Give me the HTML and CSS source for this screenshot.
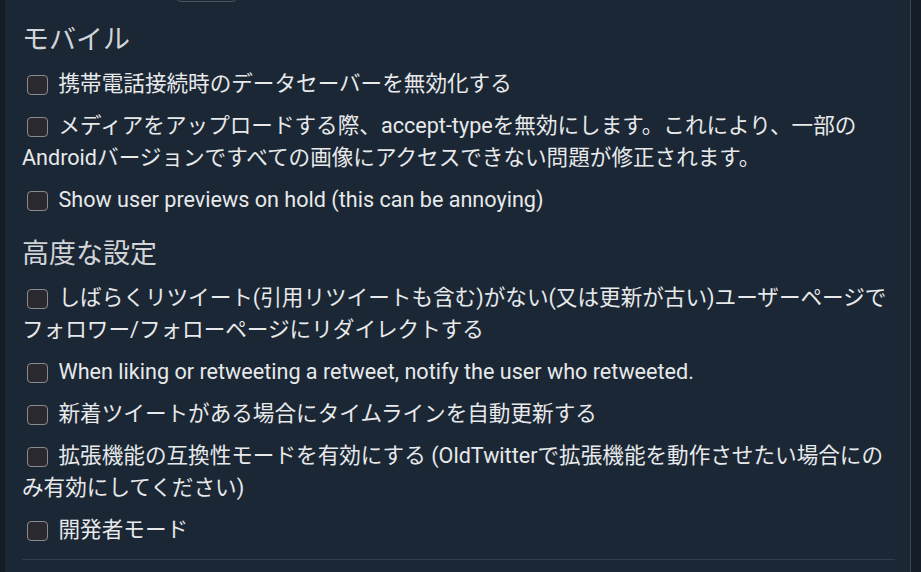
FILE: index.html
```html
<!DOCTYPE html>
<html lang="ja">
<head>
<meta charset="utf-8">
<link rel="stylesheet" href="styles.css">
</head>
<body>
<div class="layout">
  <div class="side-left"></div>
  <main class="panel">
    <div class="top-control"><span class="select-box"></span></div>
    <h2 class="section-title">モバイル</h2>
    <label class="option"><span class="check"></span>携帯電話接続時のデータセーバーを無効化する</label>
    <label class="option"><span class="check"></span>メディアをアップロードする際、accept-typeを無効にします。これにより、一部のAndroidバージョンですべての画像にアクセスできない問題が修正されます。</label>
    <label class="option"><span class="check"></span>Show user previews on hold (this can be annoying)</label>
    <h2 class="section-title second">高度な設定</h2>
    <label class="option"><span class="check"></span>しばらくリツイート(引用リツイートも含む)がない(又は更新が古い)ユーザーページでフォロワー/フォローページにリダイレクトする</label>
    <label class="option"><span class="check"></span>When liking or retweeting a retweet, notify the user who retweeted.</label>
    <label class="option"><span class="check"></span>新着ツイートがある場合にタイムラインを自動更新する</label>
    <label class="option"><span class="check"></span>拡張機能の互換性モードを有効にする (OldTwitterで拡張機能を動作させたい場合にのみ有効にしてください)</label>
    <label class="option"><span class="check"></span>開発者モード</label>
    <hr class="divider">
  </main>
  <div class="side-right"></div>
</div>
</body>
</html>
```
FILE: styles.css
```css
html, body {
  margin: 0;
  padding: 0;
  height: 100%;
  overflow: hidden;
  background: #151e28;
}
.layout {
  display: flex;
  height: 572px;
}
.side-left {
  width: 5px;
  background: #141c25;
}
.side-right {
  width: 10px;
  background: #151e28;
}
.panel {
  flex: 1;
  background: #1b2735;
  border-right: 1px solid #3a4654;
  padding: 0 15px 0 17px;
  font-family: Roboto, "Noto Sans CJK JP", sans-serif;
  color: #e7e9ea;
  overflow: hidden;
}
.top-control {
  height: 0;
  position: relative;
}
.select-box {
  position: absolute;
  left: 153px;
  top: -30px;
  width: 61px;
  height: 30px;
  border: 1px solid #4b5560;
  border-radius: 6px;
  background: #1e2a37;
}
.section-title {
  font-size: 27px;
  font-weight: 400;
  line-height: 32px;
  color: #d2d5d8;
  margin: 24px 0 12px;
}
.section-title.second {
  margin-top: 22px;
}
.option {
  display: block;
  font-size: 21.6px;
  line-height: 32px;
  margin-bottom: 10px;
}
.check {
  display: inline-block;
  width: 18.5px;
  height: 18.5px;
  border: 1.5px solid #8b8b8e;
  border-radius: 4px;
  background: #2b2930;
  vertical-align: -4px;
  margin: 0 11px 0 5px;
}
.divider {
  border: 0;
  border-top: 1px solid #2f3c4a;
  margin: 13px 0 0 0;
}
```
